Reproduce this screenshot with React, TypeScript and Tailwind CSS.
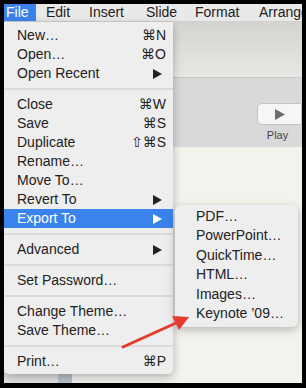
const font = { fontFamily: '"Liberation Sans", "DejaVu Sans", Arial, sans-serif' }

type Item = { label: string; shortcut?: string; sub?: boolean; active?: boolean } | "sep"

const fileMenu: Item[] = [
  { label: "New…", shortcut: "⌘N" },
  { label: "Open…", shortcut: "⌘O" },
  { label: "Open Recent", sub: true },
  "sep",
  { label: "Close", shortcut: "⌘W" },
  { label: "Save", shortcut: "⌘S" },
  { label: "Duplicate", shortcut: "⇧⌘S" },
  { label: "Rename…" },
  { label: "Move To…" },
  { label: "Revert To", sub: true },
  { label: "Export To", sub: true, active: true },
  "sep",
  { label: "Advanced", sub: true },
  "sep",
  { label: "Set Password…" },
  "sep",
  { label: "Change Theme…" },
  { label: "Save Theme…" },
  "sep",
  { label: "Print…", shortcut: "⌘P" },
]

const exportItems = ["PDF…", "PowerPoint…", "QuickTime…", "HTML…", "Images…", "Keynote ’09…"]

function SubArrow({ light }: { light?: boolean }) {
  return (
    <svg width="9" height="10" viewBox="0 0 9 10" className="shrink-0">
      <polygon points="0,0 9,5 0,10" fill={light ? "#ffffff" : "#222222"} />
    </svg>
  )
}

export default function App() {
  return (
    <div className="w-[306px] h-[388px] bg-black pt-[4px] pl-[4px] pr-[4px] pb-[5px]" style={font}>
      <div className="relative w-full h-full overflow-hidden bg-[#f4f2ec] flex flex-col">
        {/* menu bar */}
        <div className="h-[18px] shrink-0 flex items-stretch bg-[#e9e9e9] border-b border-[#cfcfcf] text-[14px] leading-[17px] text-[#222] whitespace-nowrap">
          <div className="w-[32px] shrink-0 pl-[2px] bg-[#3b83ec] text-white font-medium">File</div>
          <div className="w-[10px] shrink-0" />
          <div className="w-[43px] shrink-0">Edit</div>
          <div className="w-[57px] shrink-0">Insert</div>
          <div className="w-[49px] shrink-0">Slide</div>
          <div className="w-[64px] shrink-0">Format</div>
          <div className="shrink-0">Arrange</div>
        </div>

        {/* window toolbar */}
        <div className="h-[55px] shrink-0 bg-gradient-to-b from-[#d6d4d0] to-[#e9e7e3]" />
        <div className="h-[70px] shrink-0 bg-[#d9d9d9] border-t border-[#c9c9c9] flex justify-end">
          <div className="w-[45px] pt-[25px] flex flex-col items-center">
            <div className="w-[45px] h-[22px] bg-[#f6f6f6] rounded-l-[5px] border border-[#c4c4c4] flex items-center justify-center">
              <svg width="10" height="11" viewBox="0 0 10 11">
                <polygon points="0,0 10,5.5 0,11" fill="#6e6e6e" />
              </svg>
            </div>
            <div className="text-[11px] leading-[14px] text-[#444] mt-[3px] pr-[4px]">Play</div>
          </div>
        </div>

        {/* canvas area */}
        <div className="flex-1 flex">
          <div className="w-[54px] bg-[#e1e1e1]" />
          <div className="w-[14px] bg-[#b9c3cc]" />
          <div className="flex-1 bg-[#f4f2ec]" />
        </div>

        {/* File menu */}
        <div className="absolute left-0 top-[18px] w-[169px] bg-[#eeeeee] rounded-b-[5px] pt-[4px] pb-[3px] shadow-[0_3px_10px_rgba(0,0,0,0.28)] text-[14px] text-[#222]">
          {fileMenu.map((it, i) =>
            it === "sep" ? (
              <div key={i} className="h-[12px] flex items-center">
                <div className="w-full h-[2px] bg-[#dadada]" />
              </div>
            ) : (
              <div
                key={i}
                className={`h-[19px] flex items-center justify-between pl-[13px] pr-[7px] leading-[19px] ${
                  it.active ? "bg-[#3b83ec] text-white" : ""
                }`}
              >
                <span>{it.label}</span>
                {it.shortcut && <span>{it.shortcut}</span>}
                {it.sub && (
                  <span className="pr-[4px]">
                    <SubArrow light={it.active} />
                  </span>
                )}
              </div>
            )
          )}
        </div>

        {/* Export submenu */}
        <div className="absolute left-[171px] top-[201px] w-[123px] h-[122px] bg-[#eeeeee] rounded-[6px] pt-[2px] shadow-[0_3px_10px_rgba(0,0,0,0.25)] text-[14px] text-[#222]">
          {exportItems.map((t) => (
            <div key={t} className="h-[19.4px] leading-[19.4px] pl-[21px] whitespace-nowrap">
              {t}
            </div>
          ))}
        </div>

        {/* red annotation arrow */}
        <svg className="absolute inset-0 pointer-events-none" width="298" height="379" viewBox="0 0 298 379">
          <line x1="119" y1="343" x2="172" y2="319" stroke="#e63a2e" strokeWidth="3" strokeLinecap="round" />
          <polygon points="185,313 168,312 175,326" fill="#e63a2e" />
        </svg>
      </div>
    </div>
  )
}
